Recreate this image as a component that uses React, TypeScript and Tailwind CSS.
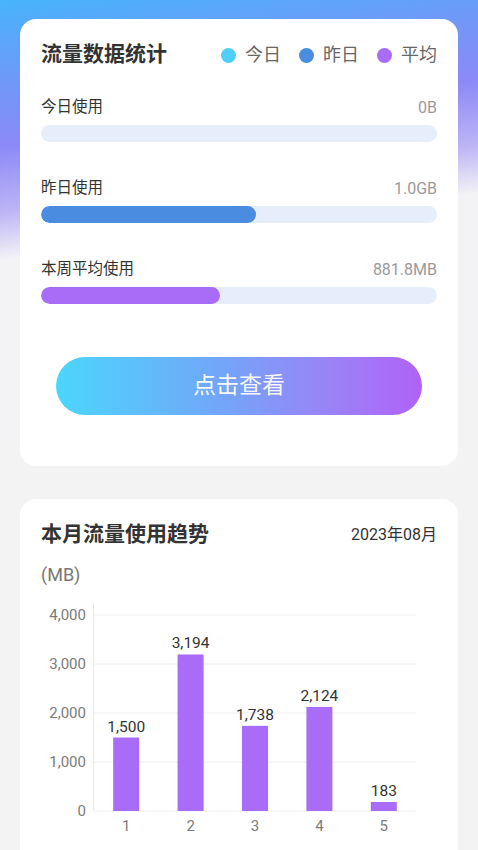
import React from "react";

const FONT = "font-['Roboto','Noto_Sans_CJK_SC',sans-serif]";

interface UsageRow {
    label: string;
    value: string;
    percent: number;
    color: string;
}

const rows: UsageRow[] = [
    { label: "今日使用", value: "0B", percent: 0, color: "#4fcdf8" },
    { label: "昨日使用", value: "1.0GB", percent: 54.2, color: "#4a8de0" },
    { label: "本周平均使用", value: "881.8MB", percent: 45.1, color: "#a96cf6" },
];

const legend = [
    { label: "今日", color: "bg-[#50cdf8]" },
    { label: "昨日", color: "bg-[#4a8de0]" },
    { label: "平均", color: "bg-[#a96cf6]" },
];

const days = [
    { day: "1", value: 1500 },
    { day: "2", value: 3194 },
    { day: "3", value: 1738 },
    { day: "4", value: 2124 },
    { day: "5", value: 183 },
];

function TrendChart() {
    // chart geometry, in svg units
    const left = 53;
    const right = 375;
    const zeroY = 211;
    const perUnit = 196 / 4000;
    const slot = (right - left) / days.length;
    const ticks = [4000, 3000, 2000, 1000, 0];

    return (
        <svg width="396" height="250" className="block">
            {ticks.map((t) => {
                const y = zeroY - t * perUnit;
                return (
                    <g key={t}>
                        <line x1={left} x2={right} y1={y} y2={y} stroke="#eeeeee" strokeWidth="1" />
                        <text
                            x="45"
                            y={y}
                            textAnchor="end"
                            dominantBaseline="central"
                            fontSize="15"
                            fill="#7a7a7a"
                            fontFamily="Roboto, sans-serif"
                        >
                            {t.toLocaleString("en-US")}
                        </text>
                    </g>
                );
            })}
            <line x1={left - 0.5} x2={left - 0.5} y1="3" y2={zeroY} stroke="#e8e8e8" strokeWidth="1" />
            {days.map((d, i) => {
                const cx = left + slot * i + slot / 2;
                const h = d.value * perUnit;
                return (
                    <g key={d.day}>
                        <rect x={cx - 13} y={zeroY - h} width="26" height={h} fill="#a96cf6" />
                        <text
                            x={cx}
                            y={zeroY - h - 11}
                            textAnchor="middle"
                            dominantBaseline="central"
                            fontSize="15.5"
                            fill="#333333"
                            fontFamily="Roboto, sans-serif"
                        >
                            {d.value.toLocaleString("en-US")}
                        </text>
                        <text
                            x={cx}
                            y="226"
                            textAnchor="middle"
                            dominantBaseline="central"
                            fontSize="15"
                            fill="#7a7a7a"
                            fontFamily="Roboto, sans-serif"
                        >
                            {d.day}
                        </text>
                    </g>
                );
            })}
        </svg>
    );
}

export default function App() {
    return (
        <div
            className={`${FONT} h-[850px] w-full overflow-hidden bg-[linear-gradient(172deg,#47b4fc_0px,#6f99f9_80px,#8b89f7_145px,#bdb4f6_210px,#f3f3f5_258px,#f3f3f3_100%)] pt-[19px]`}
        >
            {/* Usage statistics */}
            <div className="mx-[20px] rounded-[16px] bg-white px-[21px] pt-[21px] pb-[51px]">
                <div className="flex h-[30px] items-center justify-between">
                    <h2 className="text-[21px] font-bold text-[#333333]">流量数据统计</h2>
                    <div className="flex items-center gap-[18px]">
                        {legend.map((l) => (
                            <div key={l.label} className="flex items-center gap-[9px]">
                                <span className={`h-[15px] w-[15px] rounded-full ${l.color}`} />
                                <span className="text-[18px] leading-none text-[#666666]">{l.label}</span>
                            </div>
                        ))}
                    </div>
                </div>

                <div className="mt-[28px] flex flex-col gap-[37px]">
                    {rows.map((r) => (
                        <div key={r.label}>
                            <div className="flex h-[20px] items-center justify-between">
                                <span className="text-[15.5px] text-[#333333]">{r.label}</span>
                                <span className="text-[16px] text-[#9a9a9a]">{r.value}</span>
                            </div>
                            <div className="mt-[7px] h-[17px] w-full overflow-hidden rounded-full bg-[#e7eefb]">
                                <div
                                    className="h-full rounded-full"
                                    style={{ width: `${r.percent}%`, backgroundColor: r.color }}
                                />
                            </div>
                        </div>
                    ))}
                </div>

                <button className="mx-[15px] mt-[53px] flex h-[58px] w-[calc(100%-30px)] items-center justify-center rounded-full bg-[linear-gradient(90deg,#4bd6fb,#72a6f9_45%,#9b82f6_75%,#b062f7)] text-[23px] text-white/95">
                    点击查看
                </button>
            </div>

            {/* Monthly trend */}
            <div className="mx-[20px] mt-[33px] h-[400px] rounded-[16px] bg-white px-[21px] pt-[21px]">
                <div className="flex h-[30px] items-center justify-between">
                    <h2 className="text-[21px] font-bold text-[#333333]">本月流量使用趋势</h2>
                    <span className="text-[16px] text-[#333333]">2023年08月</span>
                </div>
                <div className="mt-[12px] h-[26px] text-[18px] leading-[26px] text-[#777777]">(MB)</div>
                <div className="mt-[12px]">
                    <TrendChart />
                </div>
            </div>
        </div>
    );
}
